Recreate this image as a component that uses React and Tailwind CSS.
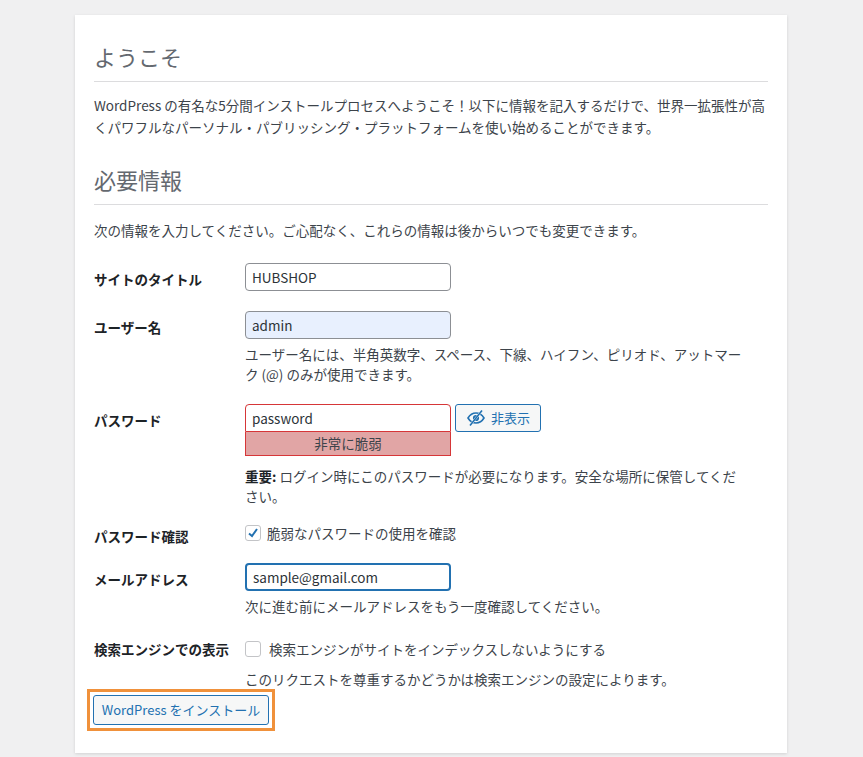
import React from 'react';

const font = { fontFamily: '"Noto Sans CJK JP", "Noto Sans", sans-serif' };

const Row = ({ label, children, className = '' }) => (
    <div className={`flex ${className}`}>
        <div className="w-[151px] shrink-0 pt-[6px] text-[13.5px] font-bold text-[#1d2327]">{label}</div>
        <div className="flex-1 min-w-0">{children}</div>
    </div>
);

const inputCls = 'w-[206px] h-[28px] px-[6px] text-[13.5px] text-[#2c3338] rounded-[4px] border border-[#8c8f94] outline-none';

export default function App() {
    return (
        <div style={font} className="min-h-[757px] bg-[#f0f0f1] pt-[15px] pb-[16px]">
            <div className="ml-[75px] w-[712px] bg-white shadow-[0_1px_3px_rgba(0,0,0,0.13)] px-[19px] pt-[24px] pb-[22px] text-[13.5px] text-[#3c434a]">
                <h1 className="text-[22px] text-[#646970] leading-[34px] pb-[8px] border-b border-[#dcdcde]">ようこそ</h1>
                <p className="mt-[12px] leading-[22px]">WordPress の有名な5分間インストールプロセスへようこそ！以下に情報を記入するだけで、世界一拡張性が高くパワフルなパーソナル・パブリッシング・プラットフォームを使い始めることができます。</p>
                <h2 className="mt-[24px] text-[22px] text-[#646970] leading-[34px] pb-[8px] border-b border-[#dcdcde]">必要情報</h2>
                <p className="mt-[14px] leading-[22px]">次の情報を入力してください。ご心配なく、これらの情報は後からいつでも変更できます。</p>

                <Row label="サイトのタイトル" className="mt-[22px]">
                    <input className={`${inputCls} bg-white`} defaultValue="HUBSHOP" />
                </Row>
                <Row label="ユーザー名" className="mt-[20px]">
                    <input className={`${inputCls} bg-[#e8f0fe]`} defaultValue="admin" />
                    <p className="mt-[5px] leading-[20px] w-[500px]">ユーザー名には、半角英数字、スペース、下線、ハイフン、ピリオド、アットマーク (@) のみが使用できます。</p>
                </Row>
                <Row label="パスワード" className="mt-[20px]">
                    <div className="flex items-start gap-[4px]">
                        <div className="w-[206px]">
                            <input className="w-[206px] h-[28px] px-[6px] text-[13.5px] text-[#2c3338] rounded-t-[4px] border border-[#d63638] bg-white outline-none" defaultValue="password" />
                            <div className="h-[24px] leading-[22px] text-center text-[#3c434a] bg-[#e1a5a5] border border-[#d63638] border-t-0">非常に脆弱</div>
                        </div>
                        <button className="h-[28px] px-[10px] flex items-center gap-[5px] rounded-[3px] border border-[#2271b1] bg-[#f6f7f7] text-[#2271b1] text-[13px]">
                            <svg width="20" height="16" viewBox="0 0 20 16" fill="none" stroke="#2271b1" strokeWidth="1.6"><path d="M2 8s3-5 8-5 8 5 8 5-3 5-8 5-8-5-8-5z" /><circle cx="10" cy="8" r="2.3" fill="#2271b1" /><path d="M16 0.5 4 15.5" strokeWidth="2.2" stroke="#f6f7f7" /><path d="M16 0.5 4 15.5" /></svg>
                            非表示
                        </button>
                    </div>
                    <p className="mt-[10px] leading-[20px] w-[500px]"><b className="text-[#1d2327]">重要:</b> ログイン時にこのパスワードが必要になります。安全な場所に保管してください。</p>
                </Row>
                <Row label="パスワード確認" className="mt-[14px]">
                    <label className="flex items-center gap-[6px] pt-[3px]">
                        <span className="w-[16px] h-[16px] rounded-[3px] border border-[#c3c4c7] flex items-center justify-center">
                            <svg width="12" height="12" viewBox="0 0 12 12" fill="none" stroke="#2271b1" strokeWidth="2"><path d="M2 6.5 5 9l5-7" /></svg>
                        </span>
                        脆弱なパスワードの使用を確認
                    </label>
                </Row>
                <Row label="メールアドレス" className="mt-[17px]">
                    <input className="w-[206px] h-[28px] px-[6px] text-[13.5px] text-[#2c3338] rounded-[4px] border-2 border-[#2271b1] bg-white outline-none" defaultValue="sample@gmail.com" />
                    <p className="mt-[5px] leading-[20px]">次に進む前にメールアドレスをもう一度確認してください。</p>
                </Row>
                <Row label="検索エンジンでの表示" className="mt-[17px]">
                    <label className="flex items-center gap-[8px] pt-[6px]">
                        <span className="w-[16px] h-[16px] rounded-[3px] border border-[#c3c4c7]" />
                        検索エンジンがサイトをインデックスしないようにする
                    </label>
                    <p className="mt-[9px] leading-[20px]">このリクエストを尊重するかどうかは検索エンジンの設定によります。</p>
                </Row>
                <div className="mt-0 -ml-[7px] w-[188px] border-[3px] border-[#f0913b] p-[3px]">
                    <button className="w-[176px] h-[30px] rounded-[3px] border border-[#2271b1] bg-[#f6f7f7] text-[#2271b1] text-[13px]">WordPress をインストール</button>
                </div>
            </div>
        </div>
    );
}
